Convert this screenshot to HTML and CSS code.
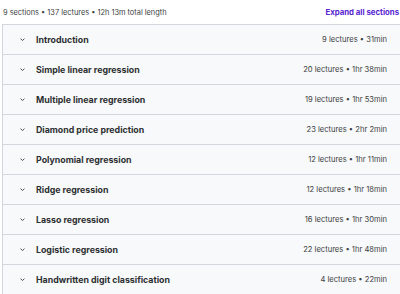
FILE: index.html
```html
<!DOCTYPE html>
<html>
<head>
<meta charset="utf-8">
<link rel="stylesheet" href="styles.css">
</head>
<body>
<div class="curriculum">
  <div class="header">
    <span class="meta">9 sections • 137 lectures • 12h 13m total length</span>
    <span class="expand">Expand all sections</span>
  </div>
  <div class="sections">
    <div class="row"><span class="chev"><svg viewBox="0 0 10 10" width="7" height="7"><path d="M2.2 3.8 L5 6.4 L7.8 3.8" fill="none" stroke="#2d2f31" stroke-width="1.2"/></svg></span><span class="title">Introduction</span><span class="info">9 lectures • 31min</span></div>
    <div class="row"><span class="chev"><svg viewBox="0 0 10 10" width="7" height="7"><path d="M2.2 3.8 L5 6.4 L7.8 3.8" fill="none" stroke="#2d2f31" stroke-width="1.2"/></svg></span><span class="title">Simple linear regression</span><span class="info">20 lectures • 1hr 38min</span></div>
    <div class="row"><span class="chev"><svg viewBox="0 0 10 10" width="7" height="7"><path d="M2.2 3.8 L5 6.4 L7.8 3.8" fill="none" stroke="#2d2f31" stroke-width="1.2"/></svg></span><span class="title">Multiple linear regression</span><span class="info">19 lectures • 1hr 53min</span></div>
    <div class="row"><span class="chev"><svg viewBox="0 0 10 10" width="7" height="7"><path d="M2.2 3.8 L5 6.4 L7.8 3.8" fill="none" stroke="#2d2f31" stroke-width="1.2"/></svg></span><span class="title">Diamond price prediction</span><span class="info">23 lectures • 2hr 2min</span></div>
    <div class="row"><span class="chev"><svg viewBox="0 0 10 10" width="7" height="7"><path d="M2.2 3.8 L5 6.4 L7.8 3.8" fill="none" stroke="#2d2f31" stroke-width="1.2"/></svg></span><span class="title">Polynomial regression</span><span class="info">12 lectures • 1hr 11min</span></div>
    <div class="row"><span class="chev"><svg viewBox="0 0 10 10" width="7" height="7"><path d="M2.2 3.8 L5 6.4 L7.8 3.8" fill="none" stroke="#2d2f31" stroke-width="1.2"/></svg></span><span class="title">Ridge regression</span><span class="info">12 lectures • 1hr 18min</span></div>
    <div class="row"><span class="chev"><svg viewBox="0 0 10 10" width="7" height="7"><path d="M2.2 3.8 L5 6.4 L7.8 3.8" fill="none" stroke="#2d2f31" stroke-width="1.2"/></svg></span><span class="title">Lasso regression</span><span class="info">16 lectures • 1hr 30min</span></div>
    <div class="row"><span class="chev"><svg viewBox="0 0 10 10" width="7" height="7"><path d="M2.2 3.8 L5 6.4 L7.8 3.8" fill="none" stroke="#2d2f31" stroke-width="1.2"/></svg></span><span class="title">Logistic regression</span><span class="info">22 lectures • 1hr 48min</span></div>
    <div class="row"><span class="chev"><svg viewBox="0 0 10 10" width="7" height="7"><path d="M2.2 3.8 L5 6.4 L7.8 3.8" fill="none" stroke="#2d2f31" stroke-width="1.2"/></svg></span><span class="title">Handwritten digit classification</span><span class="info">4 lectures • 22min</span></div>
  </div>
</div>
</body>
</html>
```
FILE: styles.css
```css
html, body {
  margin: 0;
  padding: 0;
  background: #ffffff;
  overflow: hidden;
}
body {
  font-family: "Inter", "Roboto", sans-serif;
  color: #2d2f31;
}
.curriculum {
  width: 398px;
  margin-left: 2px;
}
.header {
  display: flex;
  justify-content: space-between;
  align-items: center;
  height: 24px;
  padding-left: 1px;
  padding-right: 1px;
}
.meta {
  font-size: 7.4px;
  color: #3e4143;
}
.expand {
  font-size: 7.8px;
  font-weight: 700;
  color: #5624d0;
}
.sections {
  border-left: 1px solid #d1d7dc;
  border-top: 1px solid #d1d7dc;
}
.row {
  display: flex;
  align-items: center;
  height: 29px;
  background: #f7f9fa;
  border-bottom: 1px solid #d1d7dc;
  padding-left: 16px;
  padding-right: 13px;
}
.chev {
  display: flex;
  width: 17px;
}
.title {
  font-size: 8.8px;
  font-weight: 700;
  flex: 1;
}
.info {
  font-size: 7.6px;
  color: #3e4143;
}
```
